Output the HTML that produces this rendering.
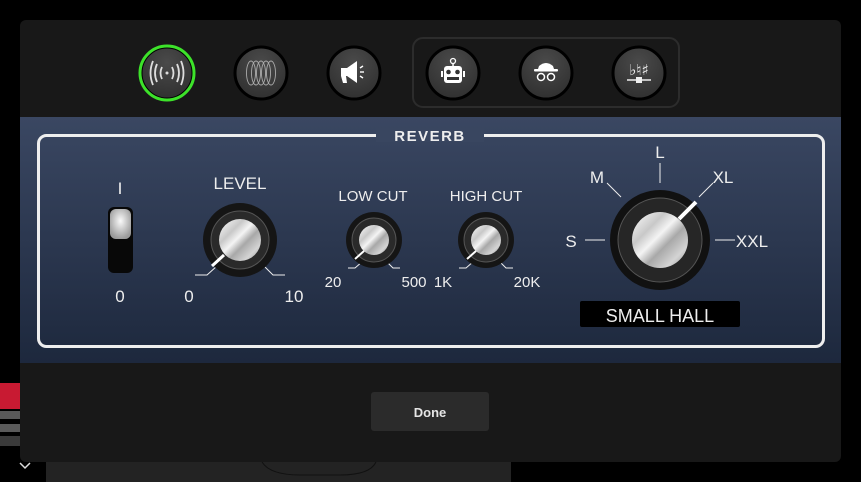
<!DOCTYPE html>
<html><head><meta charset="utf-8"><style>
body{margin:0;width:861px;height:482px;overflow:hidden;background:#000;font-family:"Liberation Sans",sans-serif}
svg{position:absolute;left:0;top:0}
</style></head><body>
<svg width="861" height="482" viewBox="0 0 861 482">
<defs>
<linearGradient id="pb" x1="0" y1="0" x2="0" y2="1"><stop offset="0" stop-color="#3a4762"/><stop offset="1" stop-color="#1d283d"/></linearGradient>
<radialGradient id="btn" cx="0.5" cy="0.3" r="0.7"><stop offset="0" stop-color="#4a4a4a"/><stop offset="1" stop-color="#303030"/></radialGradient>
<linearGradient id="met" x1="0" y1="0" x2="1" y2="1"><stop offset="0" stop-color="#ffffff"/><stop offset="0.3" stop-color="#c8c8c8"/><stop offset="0.45" stop-color="#f4f4f4"/><stop offset="0.6" stop-color="#a8a8a8"/><stop offset="0.8" stop-color="#d4d4d4"/><stop offset="1" stop-color="#8a8a8a"/></linearGradient>
<radialGradient id="tg" cx="0.5" cy="0.4" r="0.6"><stop offset="0" stop-color="#fafafa"/><stop offset="1" stop-color="#9a9a9a"/></radialGradient>
</defs>
<rect x="0" y="383" width="20" height="26" fill="#c81a32"/>
<rect x="0" y="411" width="20" height="8" fill="#5a5a5a"/>
<rect x="0" y="424" width="20" height="8" fill="#5a5a5a"/>
<rect x="0" y="436" width="20" height="10" fill="#3a3a3a"/>
<rect x="46" y="462" width="465" height="20" fill="#232323"/>
<path d="M20 463 L25 468 L30 463" stroke="#ddd" stroke-width="1.5" fill="none"/>
<path d="M262 462 Q270 475 300 475 L340 475 Q370 475 376 462" stroke="#111" fill="none"/>
<rect x="20" y="20" width="821" height="442" rx="6" fill="#181818"/>
<rect x="20" y="117" width="821" height="246" fill="url(#pb)"/>
<rect x="413" y="38" width="266" height="69" rx="10" fill="none" stroke="#2c2c2c" stroke-width="2"/>
<g stroke="#000" stroke-width="3" fill="url(#btn)">
<circle cx="167" cy="73" r="26"/><circle cx="261" cy="73" r="26"/><circle cx="354" cy="73" r="26"/>
<circle cx="453" cy="73" r="26"/><circle cx="546" cy="73" r="26"/><circle cx="639" cy="73" r="26"/>
</g>
<circle cx="167" cy="73" r="27" fill="none" stroke="#3de22a" stroke-width="3"/>
<g stroke="#ddd" stroke-width="1.8" fill="none">
<path d="M162 67 Q159 73 162 79"/><path d="M172 67 Q175 73 172 79"/>
<path d="M157 64 Q153 73 157 82"/><path d="M177 64 Q181 73 177 82"/>
<path d="M153 61 Q148 73 153 85"/><path d="M181 61 Q186 73 181 85"/>
</g>
<circle cx="167" cy="73" r="1.5" fill="#ddd"/>
<g stroke="#aaa" stroke-width="0.9" fill="none">
<ellipse cx="251" cy="73" rx="4.5" ry="12"/><ellipse cx="256" cy="73" rx="4.5" ry="12"/><ellipse cx="261" cy="73" rx="4.5" ry="12"/><ellipse cx="266" cy="73" rx="4.5" ry="12"/><ellipse cx="271" cy="73" rx="4.5" ry="12"/>
</g>
<path d="M341 68 h6 l10 -7 v22 l-10 -7 h-1 l1 7 h-4 l-2 -7 z" fill="#fff"/>
<g stroke="#fff" stroke-width="1.4"><path d="M360 68 l3 -2"/><path d="M360 72 h4"/><path d="M360 76 l3 2"/></g>
<g fill="#fff"><circle cx="453" cy="61" r="2.5" fill="none" stroke="#fff" stroke-width="1.3"/><rect x="452.3" y="63" width="1.5" height="3"/>
<rect x="444" y="66" width="18" height="17" rx="3"/><rect x="441" y="71" width="2" height="6"/><rect x="463" y="71" width="2" height="6"/></g>
<circle cx="448.5" cy="72" r="2.3" fill="#333"/><circle cx="457.5" cy="72" r="2.3" fill="#333"/><rect x="447" y="77" width="12" height="3" fill="#333"/>
<g fill="#fff"><path d="M539 66 q7 -6 14 0 l1 3 h-16 z"/><rect x="534" y="69" width="24" height="2.5" rx="1"/></g>
<g stroke="#fff" stroke-width="1.5" fill="#333"><circle cx="541" cy="77" r="3.5"/><circle cx="551" cy="77" r="3.5"/></g>
<text x="639" y="75" fill="#eee" font-size="15" text-anchor="middle" font-family="DejaVu Sans">♭♮♯</text>
<path d="M627 80 h24" stroke="#eee" stroke-width="1.5"/><rect x="636" y="77" width="6" height="6" fill="#eee"/>
<rect x="38.5" y="135.5" width="785" height="211" rx="8" fill="none" stroke="#eee" stroke-width="3"/>
<rect x="376" y="128" width="108" height="14" fill="#394660"/>
<text x="430" y="141" fill="#eee" font-size="15" font-weight="bold" text-anchor="middle" letter-spacing="1.5">REVERB</text>
<g fill="#eee" font-size="17" text-anchor="middle">
<text x="120" y="194">I</text><text x="120" y="302">0</text>
<text x="240" y="189">LEVEL</text><text x="189" y="302">0</text><text x="294" y="302">10</text>
<text x="373" y="201" font-size="15">LOW CUT</text><text x="333" y="287" font-size="15">20</text><text x="414" y="287" font-size="15">500</text>
<text x="486" y="201" font-size="15">HIGH CUT</text><text x="443" y="287" font-size="15">1K</text><text x="527" y="287" font-size="15">20K</text>
<text x="660" y="158">L</text><text x="597" y="183">M</text><text x="723" y="183">XL</text><text x="571" y="247">S</text><text x="752" y="247">XXL</text>
</g>
<rect x="108" y="207" width="25" height="66" rx="6" fill="#080808"/>
<rect x="110" y="209" width="21" height="30" rx="6" fill="url(#tg)"/>
<g stroke="#eee" stroke-width="1" fill="none"><path d="M195 275 h12 l10 -9"/><path d="M285 275 h-12 l-9 -9"/>
<path d="M348 268 h7 l8 -7"/><path d="M400 268 h-7 l-7 -7"/><path d="M459 268 h7 l8 -7"/><path d="M513 268 h-7 l-7 -7"/>
<path d="M660 163 v20"/><path d="M607 183 l14 14"/><path d="M713 183 l-14 14"/><path d="M585 240 h20"/><path d="M715 240 h20"/></g>
<circle cx="240" cy="240" r="37" fill="#151515"/><circle cx="240" cy="240" r="29" fill="#2a2a2a" stroke="#555" stroke-width="1"/>
<circle cx="240" cy="240" r="21" fill="url(#met)"/>
<path d="M224 255 l-12 11" stroke="#fff" stroke-width="3"/>
<circle cx="374" cy="240" r="28" fill="#151515"/><circle cx="374" cy="240" r="22" fill="#2a2a2a" stroke="#555"/>
<circle cx="374" cy="240" r="15" fill="url(#met)"/><path d="M364 251 l-9 8" stroke="#fff" stroke-width="2"/>
<circle cx="486" cy="240" r="28" fill="#151515"/><circle cx="486" cy="240" r="22" fill="#2a2a2a" stroke="#555"/>
<circle cx="486" cy="240" r="15" fill="url(#met)"/><path d="M476 251 l-9 8" stroke="#fff" stroke-width="2"/>
<circle cx="660" cy="240" r="50" fill="#111"/><circle cx="660" cy="240" r="42" fill="#262626" stroke="#555"/>
<circle cx="660" cy="240" r="28" fill="url(#met)"/>
<path d="M679 219 l17 -17" stroke="#fff" stroke-width="4"/>
<rect x="580" y="301" width="160" height="26" rx="2" fill="#000"/>
<text x="660" y="322" fill="#eee" font-size="18" text-anchor="middle">SMALL HALL</text>
<rect x="371" y="392" width="118" height="39" rx="3" fill="#2b2b2b"/>
<text x="430" y="417" fill="#e6e6e6" font-size="13" font-weight="bold" text-anchor="middle">Done</text>
</svg>
</body></html>
